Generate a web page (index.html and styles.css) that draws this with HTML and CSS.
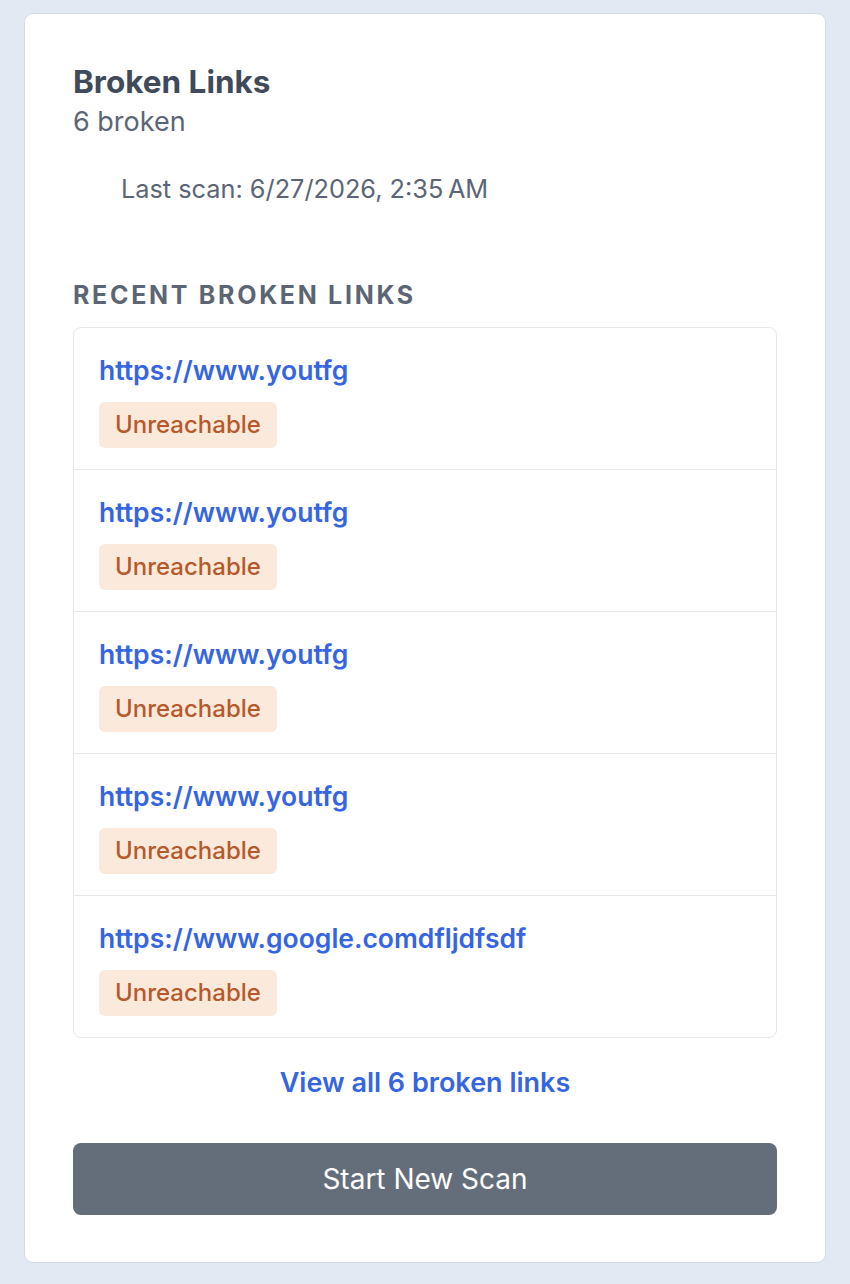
FILE: index.html
```html
<!DOCTYPE html>
<html>
<head>
<meta charset="utf-8">
<link rel="stylesheet" href="styles.css">
</head>
<body>
<div class="card">
  <h2 class="title">Broken Links</h2>
  <div class="subtitle">6 broken</div>
  <div class="last-scan">Last scan: 6/27/2026, 2:35&#8239;AM</div>
  <h3 class="section">Recent Broken Links</h3>
  <ul class="list">
    <li class="row"><a class="link" href="#">https://www.youtfg</a><span class="badge">Unreachable</span></li>
    <li class="row"><a class="link" href="#">https://www.youtfg</a><span class="badge">Unreachable</span></li>
    <li class="row"><a class="link" href="#">https://www.youtfg</a><span class="badge">Unreachable</span></li>
    <li class="row"><a class="link" href="#">https://www.youtfg</a><span class="badge">Unreachable</span></li>
    <li class="row"><a class="link" href="#">https://www.google.comdfljdfsdf</a><span class="badge">Unreachable</span></li>
  </ul>
  <div class="view-all"><a href="#">View all 6 broken links</a></div>
  <button class="scan-btn">Start New Scan</button>
</div>
</body>
</html>
```
FILE: styles.css
```css
* { box-sizing: border-box; }
html, body { margin: 0; }
body {
  background: #e3e9f3;
  font-family: Inter, "Noto Sans", "Liberation Sans", sans-serif;
  padding: 13px 24px 20px;
}
.card {
  background: #fff;
  border: 1.5px solid #d3dbe6;
  border-radius: 9px;
  padding: 48px 48px 47px;
  display: flex;
  flex-direction: column;
}
.title {
  margin: 0;
  font-size: 31.5px;
  line-height: 40px;
  font-weight: 700;
  color: #3f4a5a;
}
.subtitle {
  margin-top: 2px;
  font-size: 27px;
  line-height: 36px;
  color: #5b6575;
}
.last-scan {
  margin-top: 34px;
  padding-left: 48px;
  font-size: 25.3px;
  line-height: 30px;
  color: #5b6575;
}
.section {
  margin: 76px 0 0;
  font-size: 25px;
  line-height: 30px;
  font-weight: 700;
  letter-spacing: 2.7px;
  text-transform: uppercase;
  color: #5c6573;
}
.list {
  list-style: none;
  margin: 17px 0 0;
  padding: 0;
  border: 1.5px solid #e6e8eb;
  border-radius: 8px;
}
.row {
  display: flex;
  flex-direction: column;
  align-items: flex-start;
  padding: 24px 25px 21px;
  border-top: 1.5px solid #e6e8eb;
}
.row:first-child { border-top: none; }
.link {
  font-size: 26.5px;
  line-height: 36px;
  font-weight: 600;
  color: #3565e0;
  text-decoration: none;
}
.badge {
  margin-top: 14px;
  background: #fbeadb;
  color: #b65a2c;
  font-size: 24px;
  font-weight: 500;
  line-height: 46px;
  padding: 0 16px;
  border-radius: 6px;
}
.view-all {
  margin-top: 27px;
  text-align: center;
  font-size: 27px;
  line-height: 36px;
  font-weight: 600;
}
.view-all a { color: #3565e0; text-decoration: none; }
.scan-btn {
  margin-top: 42px;
  height: 72px;
  border: none;
  border-radius: 8px;
  background: #646e7b;
  color: #fff;
  font-family: inherit;
  font-size: 28px;
  font-weight: 400;
}
```
